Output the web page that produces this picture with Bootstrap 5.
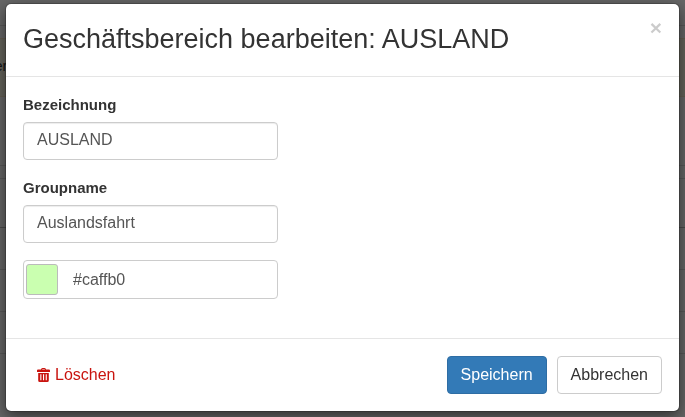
<!DOCTYPE html>
<html lang="de">
<head>
  <meta charset="UTF-8">
  <meta name="viewport" content="width=device-width, initial-scale=1.0">
  <title>Geschäftsbereich bearbeiten</title>
  <link href="https://cdn.jsdelivr.net/npm/bootstrap@5.3.2/dist/css/bootstrap.min.css" rel="stylesheet">
  <style>
    body { font-family: "Liberation Sans", Arial, sans-serif; font-size: 16px; color: #333; overflow: hidden; background: #fff; }

    /* page behind the backdrop */
    .bg-row { border-bottom: 1px solid #ddd; }
    .bg-r1 { height: 26px; }
    .bg-r2 { height: 12px; border-bottom: 0; }
    .bg-r3 { height: 59px; background: #fcf8e3; border-top: 1px solid #faebcc; border-bottom-color: #faebcc; font-size: 14px; line-height: 54px; color: #333; margin-left: -34px; }
    .bg-r4 { height: 69px; }
    .bg-r5 { height: 13px; }
    .bg-r6 { height: 49px; border-bottom-color: #bbb; }
    .bg-r7 { height: 42px; }
    .bg-r8 { height: 42px; }
    .bg-r9 { height: 42px; }

    .modal-backdrop.show { opacity: .6; }
    .edit-dialog { max-width: none; width: 675px; margin: 3px 5px; }
    .edit-dialog .modal-content { height: 409px; border: 1px solid rgba(0,0,0,.2); border-radius: 6px; box-shadow: 0 5px 15px rgba(0,0,0,.5); }
    .edit-head { height: 73px; padding: 0 17px; border-bottom: 1px solid #e5e5e5; }
    .edit-title { font-size: 27px; font-weight: 400; line-height: 1; margin: 0; padding-top: 22px; color: #333; }
    .edit-close { top: 13px; right: 17px; padding: 0; border: 0; background: none; font-size: 21px; font-weight: 700; line-height: 1; color: #000; opacity: .2; }
    .edit-body { height: 261px; padding: 17px 17px 0; }
    .edit-label { display: block; font-size: 15px; font-weight: 700; line-height: 22px; margin-bottom: 6px; color: #333; }
    .edit-field { width: 255px; height: 38px; padding: 5px 13px 7px; font-size: 16px; color: #555; border: 1px solid #ccc; border-radius: 4px; box-shadow: inset 0 1px 1px rgba(0,0,0,.075); margin-bottom: 17px; }
    .edit-color { width: 255px; height: 39px; border: 1px solid #ccc; border-radius: 4px; padding: 2px; color: #555; }
    .edit-swatch { width: 32px; height: 31px; background: #caffb0; border: 1px solid #bbb; border-radius: 3px; }
    .edit-color span { margin-left: 15px; }
    .edit-foot { height: 73px; padding: 0 17px; border-top: 1px solid #e5e5e5; }
    .edit-btns { gap: 10px; }
    .edit-btn { height: 38px; padding: 0 13px; font-size: 16px; border-radius: 4px; }
    .btn-save { background: #337ab7; border: 1px solid #2e6da4; color: #fff; }
    .btn-cancel { background: #fff; border: 1px solid #ccc; color: #333; }
    .btn-del { color: #c9140f; text-decoration: none; padding-left: 14px; gap: 5px; }
  </style>
</head>
<body>
  <div class="bg-row bg-r1"></div>
  <div class="bg-row bg-r2"></div>
  <div class="bg-row bg-r3">Fahrer</div>
  <div class="bg-row bg-r4"></div>
  <div class="bg-row bg-r5"></div>
  <div class="bg-row bg-r6"></div>
  <div class="bg-row bg-r7"></div>
  <div class="bg-row bg-r8"></div>
  <div class="bg-row bg-r9"></div>

  <div class="modal-backdrop show"></div>
  <div class="modal d-block" tabindex="-1">
    <div class="modal-dialog edit-dialog">
      <div class="modal-content">
        <div class="edit-head position-relative">
          <h4 class="edit-title">Geschäftsbereich bearbeiten: AUSLAND</h4>
          <button type="button" class="edit-close position-absolute">×</button>
        </div>
        <div class="edit-body">
          <label class="edit-label" for="bez">Bezeichnung</label>
          <input type="text" class="edit-field d-block" id="bez" value="AUSLAND">
          <label class="edit-label" for="grp">Groupname</label>
          <input type="text" class="edit-field d-block" id="grp" value="Auslandsfahrt">
          <div class="edit-color d-flex align-items-center">
            <div class="edit-swatch"></div>
            <span>#caffb0</span>
          </div>
        </div>
        <div class="edit-foot d-flex align-items-center">
          <a href="#" class="btn-del d-flex align-items-center">
            <svg width="13" height="14" viewBox="0 0 13 14" fill="currentColor"><path fill-rule="evenodd" d="M4 1.500Q4 0 5.500 0h2Q9 0 9 1.500h3Q13 1.500 13 2.500V4H0V2.500Q0 1.500 1 1.500zM5.200 1.500h2.600V1H5.200zM1.200 5h10.600v7.500Q11.800 14 10.300 14H2.700Q1.200 14 1.200 12.500zM3.300 6.200v6h1.100v-6zM6 6.200v6h1.100v-6zM8.700 6.200v6h1.100v-6z"/></svg>
            Löschen
          </a>
          <div class="ms-auto d-flex edit-btns">
            <button type="button" class="edit-btn btn-save">Speichern</button>
            <button type="button" class="edit-btn btn-cancel">Abbrechen</button>
          </div>
        </div>
      </div>
    </div>
  </div>
  <script src="https://cdn.jsdelivr.net/npm/bootstrap@5.3.2/dist/js/bootstrap.bundle.min.js"></script>
</body>
</html>
